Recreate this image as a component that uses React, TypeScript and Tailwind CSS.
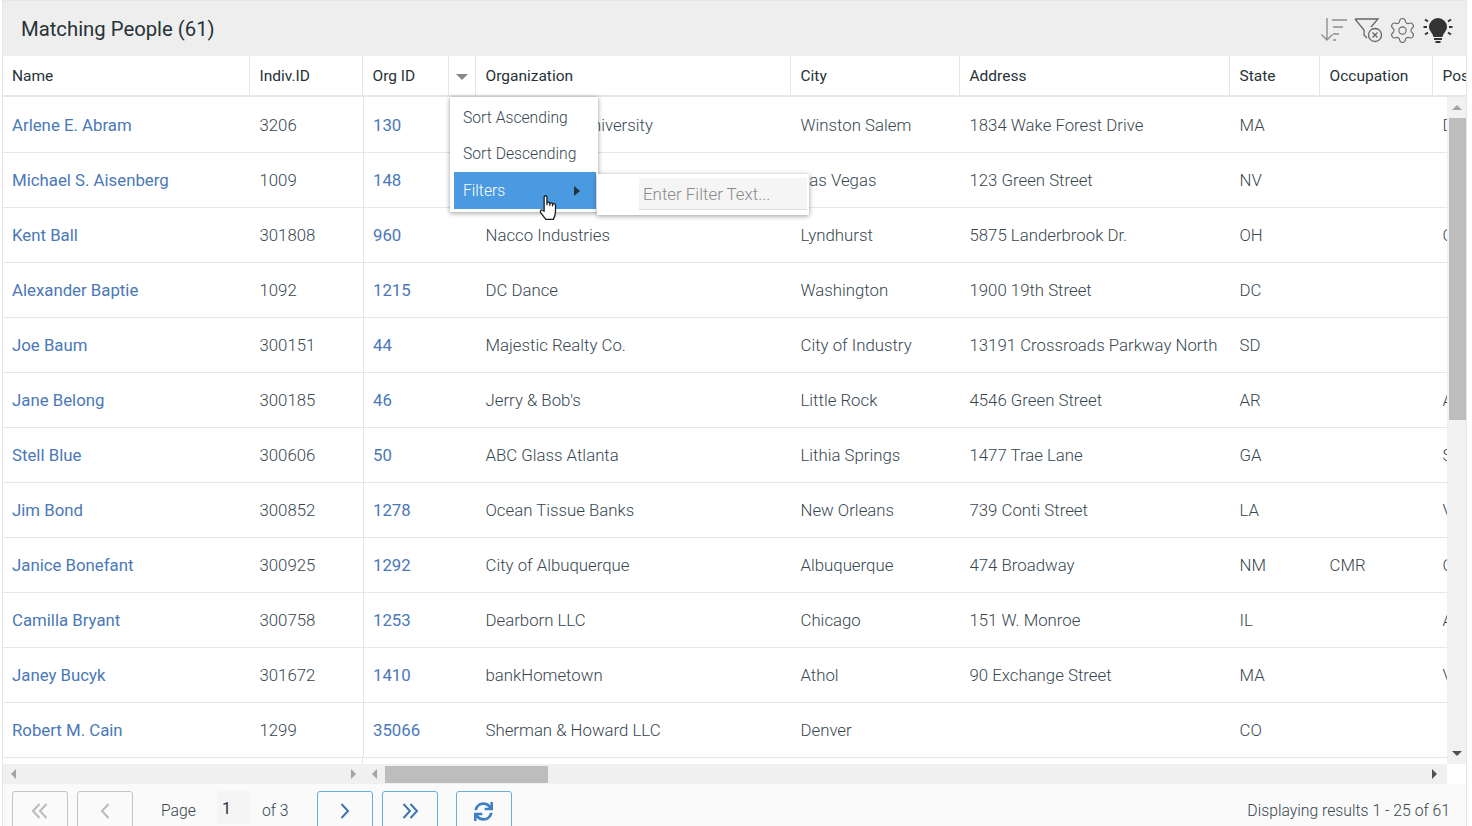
import { FaSync } from "react-icons/fa";
import { Settings } from "lucide-react";

interface Person {
  name: string;
  indiv: string;
  org: string;
  organization: string;
  city: string;
  address: string;
  state: string;
  occupation: string;
  pos: string;
}

const people: Person[] = [
  { name: "Arlene E. Abram", indiv: "3206", org: "130", organization: "Wake Forest University", city: "Winston Salem", address: "1834 Wake Forest Drive", state: "MA", occupation: "", pos: "D" },
  { name: "Michael S. Aisenberg", indiv: "1009", org: "148", organization: "MGM Resorts", city: "Las Vegas", address: "123 Green Street", state: "NV", occupation: "", pos: "" },
  { name: "Kent Ball", indiv: "301808", org: "960", organization: "Nacco Industries", city: "Lyndhurst", address: "5875 Landerbrook Dr.", state: "OH", occupation: "", pos: "C" },
  { name: "Alexander Baptie", indiv: "1092", org: "1215", organization: "DC Dance", city: "Washington", address: "1900 19th Street", state: "DC", occupation: "", pos: "" },
  { name: "Joe Baum", indiv: "300151", org: "44", organization: "Majestic Realty Co.", city: "City of Industry", address: "13191 Crossroads Parkway North", state: "SD", occupation: "", pos: "" },
  { name: "Jane Belong", indiv: "300185", org: "46", organization: "Jerry & Bob's", city: "Little Rock", address: "4546 Green Street", state: "AR", occupation: "", pos: "A" },
  { name: "Stell Blue", indiv: "300606", org: "50", organization: "ABC Glass Atlanta", city: "Lithia Springs", address: "1477 Trae Lane", state: "GA", occupation: "", pos: "S" },
  { name: "Jim Bond", indiv: "300852", org: "1278", organization: "Ocean Tissue Banks", city: "New Orleans", address: "739 Conti Street", state: "LA", occupation: "", pos: "V" },
  { name: "Janice Bonefant", indiv: "300925", org: "1292", organization: "City of Albuquerque", city: "Albuquerque", address: "474 Broadway", state: "NM", occupation: "CMR", pos: "C" },
  { name: "Camilla Bryant", indiv: "300758", org: "1253", organization: "Dearborn LLC", city: "Chicago", address: "151 W. Monroe", state: "IL", occupation: "", pos: "A" },
  { name: "Janey Bucyk", indiv: "301672", org: "1410", organization: "bankHometown", city: "Athol", address: "90 Exchange Street", state: "MA", occupation: "", pos: "V" },
  { name: "Robert M. Cain", indiv: "1299", org: "35066", organization: "Sherman & Howard LLC", city: "Denver", address: "", state: "CO", occupation: "", pos: "" },
];

const HeaderCell = ({ className, label }: { className: string; label: string }) => (
  <div className={`flex items-center shrink-0 h-full pt-0.5 border-r border-[#e6e6e6] whitespace-nowrap overflow-hidden ${className}`}>{label}</div>
);

const PageButton = ({ active, children, className = "" }: { active?: boolean; children: React.ReactNode; className?: string }) => (
  <button className={`w-14 h-10 shrink-0 flex items-center justify-center rounded-[3px] border bg-[#fafafa] ${active ? "border-[#64aee2]" : "border-[#c4c4c4]"} ${className}`}>
    {children}
  </button>
);

export default function App() {
  return (
    <div className="relative h-[826px] w-[1472px] overflow-hidden bg-white font-['Roboto',sans-serif] text-[#333]">
      <div className="ml-0.5 w-[1465px] h-[826px] border-t border-x border-[#e6e6e6] overflow-hidden flex flex-col">
        {/* title bar */}
        <div className="h-[55px] shrink-0 bg-[#eeeeee] flex items-center justify-between pl-[18px] pr-[12px]">
          <span className="mt-0.5 text-[20.3px] text-[#263238]">Matching People (61)</span>
          <div className="flex items-center mt-[3px]">
            <svg width="28" height="28" viewBox="0 0 28 28" fill="none" stroke="#8f8f8f" strokeWidth="1.4">
              <path d="M7 2v22M1.500 18.500 7 24l5.500-5.500" />
              <path d="M12 4h15M13 11h10M13 18h6M13 24h3" />
            </svg>
            <svg width="30" height="28" viewBox="0 0 30 28" fill="none" stroke="#666" strokeWidth="1.3" className="ml-1">
              <path d="M3 3h23l-7 8M3 3l9 11v5l3 3" />
              <circle cx="23" cy="19" r="6.500" />
              <path d="M20.500 16.500l5 5M25.500 16.500l-5 5" />
            </svg>
            <Settings size={29} strokeWidth={0.9} color="#666" className="ml-1.5" />
            <svg width="32" height="28" viewBox="0 0 32 28" fill="#333" className="ml-[5px]">
              <path d="M16 2a9 9 0 0 0-9 9c0 4 3.500 5.500 4.500 10h9c1-4.500 4.500-6 4.500-10a9 9 0 0 0-9-9z" />
              <rect x="12" y="22" width="8" height="2" />
              <rect x="13.500" y="25" width="5" height="2" />
              <path d="M1.500 11h3.500M27 11h3.500M3 3.500l3 2M29 3.500l-3 2M3 18.500l3-2M29 18.500l-3-2" stroke="#333" strokeWidth="2" />
            </svg>
          </div>
        </div>

        {/* column headers */}
        <div className="h-[41px] shrink-0 flex items-center border-b-2 border-[#e6e6e6] text-[15.5px] text-[#263238] overflow-hidden">
          <HeaderCell className="w-[247px] pl-[9px]" label="Name" />
          <HeaderCell className="w-[113px] pl-[9.5px]" label="Indiv.ID" />
          <HeaderCell className="w-[86px] pl-[9.5px]" label="Org ID" />
          <div className="w-[27px] h-full shrink-0 flex items-center justify-center border-r border-[#e6e6e6] bg-white">
            <span className="mt-[3px] w-0 h-0 border-x-[6px] border-x-transparent border-t-[6px] border-t-[#888]" />
          </div>
          <HeaderCell className="w-[315px] pl-[9.5px]" label="Organization" />
          <HeaderCell className="w-[169px] pl-[9.5px]" label="City" />
          <HeaderCell className="w-[270px] pl-[9.5px]" label="Address" />
          <HeaderCell className="w-[90px] pl-[9.5px]" label="State" />
          <HeaderCell className="w-[113px] pl-[9.5px]" label="Occupation" />
          <div className="pl-[9.5px] pt-0.5 whitespace-nowrap">Position</div>
        </div>

        {/* body and vertical scrollbar */}
        <div className="h-[667px] shrink-0 flex">
          <div className="w-[1444px] shrink-0 overflow-hidden">
            {people.map((p) => (
              <div key={p.name} className="h-[55px] first:h-[56px] flex items-center border-b border-[#e6e6e6] text-[16.8px] font-light text-[#37474f] whitespace-nowrap">
                <div className="w-[247px] shrink-0 pl-[9px] pt-0.5 font-normal text-[#4a78b8]">{p.name}</div>
                <div className="w-[113px] shrink-0 pl-[9.5px] pt-0.5">{p.indiv}</div>
                <div className="w-[113px] h-full shrink-0 pl-[9px] pt-0.5 flex items-center border-l border-[#e6e6e6] font-normal text-[#4a78b8]">{p.org}</div>
                <div className="w-[315px] shrink-0 pl-[9.5px] pt-0.5">{p.organization}</div>
                <div className="w-[169px] shrink-0 pl-[9.5px] pt-0.5">{p.city}</div>
                <div className="w-[270px] shrink-0 pl-[9.5px] pt-0.5">{p.address}</div>
                <div className="w-[90px] shrink-0 pl-[9.5px] pt-0.5">{p.state}</div>
                <div className="w-[113px] shrink-0 pl-[9.5px] pt-0.5">{p.occupation}</div>
                <div className="pl-[9.5px] pt-0.5">{p.pos}</div>
              </div>
            ))}
            <div className="h-1.5 w-[360px] border-r border-[#e6e6e6]" />
          </div>
          <div className="w-[19px] shrink-0 bg-[#f1f1f1] flex flex-col items-center">
            <div className="h-[21px] shrink-0 flex items-center justify-center">
              <span className="w-0 h-0 border-x-[5px] border-x-transparent border-b-[5px] border-b-[#a3a3a3]" />
            </div>
            <div className="w-[17px] ml-0.5 h-[302px] shrink-0 bg-[#bdbdbd]" />
            <div className="flex-1" />
            <div className="h-[21px] shrink-0 flex items-center justify-center">
              <span className="w-0 h-0 border-x-[5px] border-x-transparent border-t-[5px] border-t-[#505050]" />
            </div>
          </div>
        </div>

        {/* horizontal scrollbars */}
        <div className="h-5 shrink-0 flex">
          <div className="w-[1444px] bg-[#f0f0f0] flex items-center">
            <div className="w-[360px] shrink-0 flex items-center justify-between pl-2 pr-[7px]">
              <span className="w-0 h-0 border-y-[5px] border-y-transparent border-r-[5px] border-r-[#a3a3a3]" />
              <span className="w-0 h-0 border-y-[5px] border-y-transparent border-l-[5px] border-l-[#a3a3a3]" />
            </div>
            <div className="flex-1 h-full flex items-center pl-[9px] pr-2.5">
              <span className="w-0 h-0 border-y-[5px] border-y-transparent border-r-[5px] border-r-[#a3a3a3]" />
              <div className="ml-2 w-[163px] h-[17px] bg-[#bdbdbd]" />
              <div className="flex-1" />
              <span className="w-0 h-0 border-y-[5px] border-y-transparent border-l-[5px] border-l-[#505050]" />
            </div>
          </div>
        </div>

        {/* pager */}
        <div className="flex-1 bg-[#fafafa] flex items-start pt-[7px] pl-[9px] pr-4 text-[15.75px] font-light text-[#37474f]">
          <PageButton><svg width="18" height="16" viewBox="0 0 18 16" fill="none" stroke="#bbb" strokeWidth="2"><path d="M8.500 1 2 8l6.500 7M15.500 1 9 8l6.500 7" /></svg></PageButton>
          <PageButton className="ml-[9px]"><svg width="10" height="16" viewBox="0 0 10 16" fill="none" stroke="#bbb" strokeWidth="2"><path d="M8.500 1 2 8l6.500 7" /></svg></PageButton>
          <span className="ml-7 mt-2">Page</span>
          <div className="ml-[21px] w-[33px] h-[33px] bg-[#f5f5f5] pl-[5px] pt-1.5 text-base text-[#263238] font-normal">1</div>
          <span className="ml-3 mt-2">of 3</span>
          <PageButton active className="ml-7"><svg width="10" height="16" viewBox="0 0 10 16" fill="none" stroke="#3f74b5" strokeWidth="2"><path d="M1.500 1 8 8l-6.500 7" /></svg></PageButton>
          <PageButton active className="ml-[9px]"><svg width="18" height="16" viewBox="0 0 18 16" fill="none" stroke="#3f74b5" strokeWidth="2"><path d="M2.500 1 9 8l-6.500 7M9.500 1 16 8l-6.500 7" /></svg></PageButton>
          <PageButton active className="ml-[18px]"><FaSync size={19} color="#3f7fc4" /></PageButton>
          <span className="ml-auto mt-2">Displaying results 1 - 25 of 61</span>
        </div>
      </div>

      {/* column menu */}
      <div className="absolute left-[450px] top-[97px] w-[148px] h-[115px] bg-white shadow-[0_1px_5px_rgba(0,0,0,0.4)] text-[15.7px] font-light text-[#37474f] z-10">
        <div className="h-[39px] pl-[13px] pt-[9px]">Sort Ascending</div>
        <div className="h-[36px] pl-[13px] pt-[6px]">Sort Descending</div>
        <div className="ml-1 h-[37px] w-[142px] bg-[#4a9ae1] text-white pl-[9px] pt-px flex items-center justify-between pr-4">
          Filters
          <span className="w-0 h-0 border-y-[5px] border-y-transparent border-l-[6px] border-l-[#263238]" />
        </div>
      </div>
      <div className="absolute left-[597px] top-[174px] w-[212px] h-[41px] bg-white shadow-[0_1px_5px_rgba(0,0,0,0.4)] z-10 pl-[42px] pt-1">
        <div className="w-[168px] h-8 bg-[#f5f5f5] border-b border-[#ddd] pl-1 text-[16.9px] font-light text-[#8a8a8a] leading-[32px] whitespace-nowrap">Enter Filter Text...</div>
      </div>
      {/* mouse pointer */}
      <svg width="20" height="26" viewBox="0 0 18 24" fill="#fff" stroke="#1c1c1c" strokeWidth="1.2" strokeLinejoin="round" className="absolute left-[539px] top-[195px] z-20">
        <path d="M4.500 15V2Q4.500.7 5.800.7T7.100 2V9 7.800Q7.100 6.600 8.400 6.600T9.700 7.800V9.500 8.500Q9.700 7.300 11 7.300T12.300 8.500V10 9.200Q12.300 8 13.600 8T15 9.200V15Q15 19 13 22.500H6L1.500 16.500Q.5 15 1.600 14 2.800 13.200 4.500 15Z" />
      </svg>
    </div>
  );
}
